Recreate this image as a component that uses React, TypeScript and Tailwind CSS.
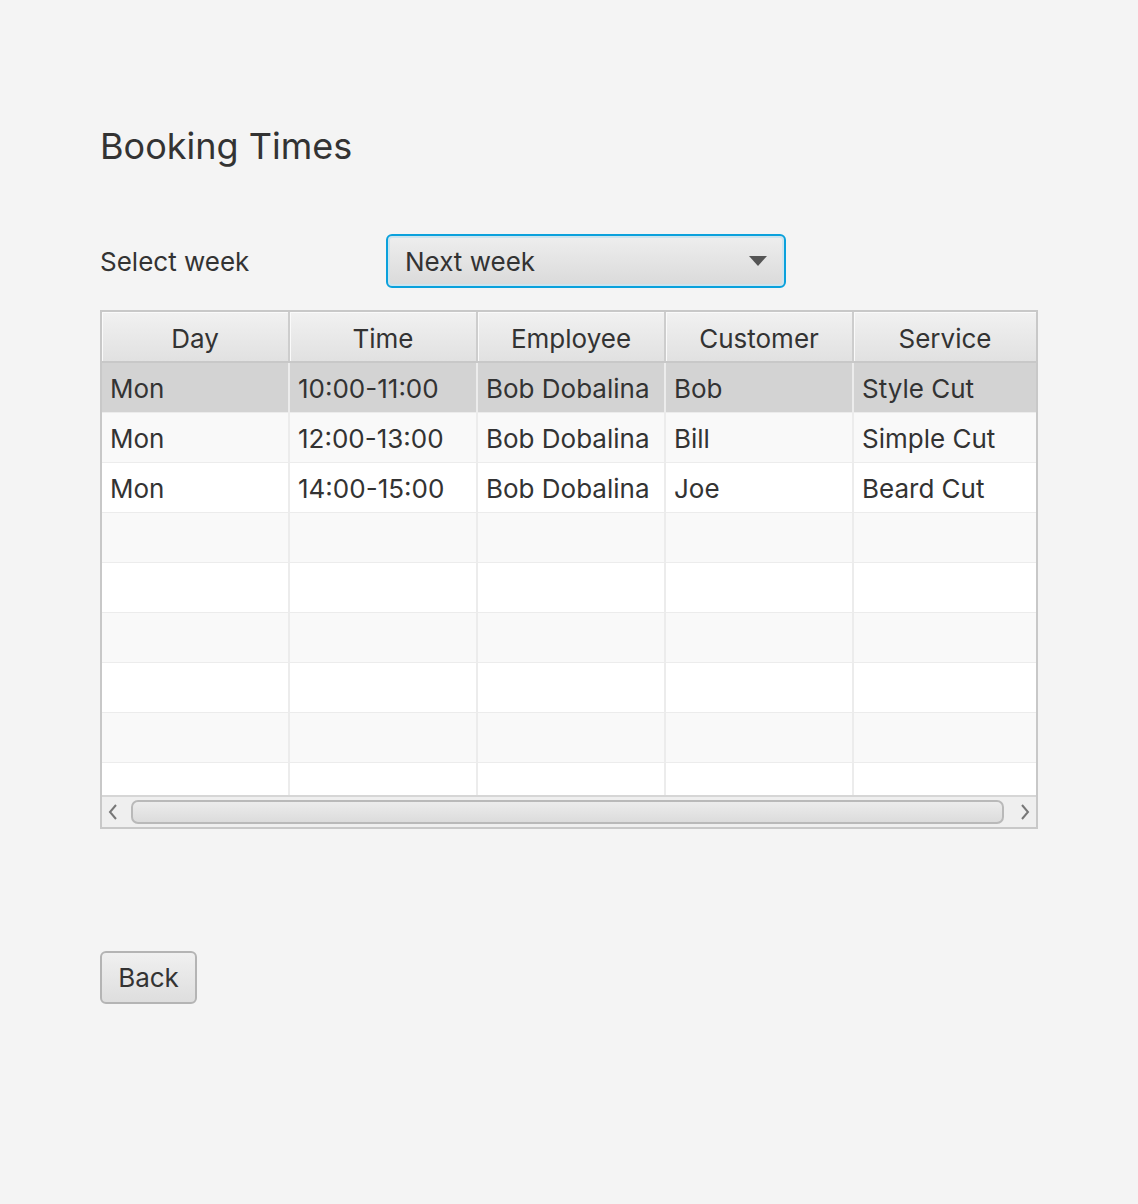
import React from "react"

const font = { fontFamily: "Inter, 'Liberation Sans', sans-serif" }

const columns = ["Day", "Time", "Employee", "Customer", "Service"]
const widths = ["w-[188px]", "w-[188px]", "w-[188px]", "w-[188px]", "flex-1"]

const bookings = [
  ["Mon", "10:00-11:00", "Bob Dobalina", "Bob", "Style Cut"],
  ["Mon", "12:00-13:00", "Bob Dobalina", "Bill", "Simple Cut"],
  ["Mon", "14:00-15:00", "Bob Dobalina", "Joe", "Beard Cut"],
]

function Row({ cells, index, selected, last }: { cells: string[]; index: number; selected?: boolean; last?: boolean }) {
  const bg = selected ? "bg-[#d3d3d3]" : index % 2 === 1 ? "bg-[#f9f9f9]" : "bg-white"
  return (
    <div className={`flex ${last ? "h-[32px]" : "h-[50px] border-b border-[#ececec]"} ${bg}`}>
      {widths.map((w, i) => (
        <div
          key={i}
          className={`${w} flex items-center px-[8px] pt-[2px] text-[26px] text-[#333] ${i < 4 ? "border-r-2 border-[#ececec]" : ""}`}
        >
          {cells[i] ?? ""}
        </div>
      ))}
    </div>
  )
}

export default function App() {
  const emptyRows = 5
  return (
    <div className="min-h-[1204px] w-full bg-[#f4f4f4] pl-[100px] pt-[124px]" style={font}>
      <h1 className="text-[36px] leading-[44px] text-[#333]">Booking Times</h1>

      <div className="mt-[66px] flex items-center">
        <span className="w-[286px] text-[26px] text-[#333]">Select week</span>
        <div className="flex h-[54px] w-[400px] items-center justify-between rounded-[6px] border-2 border-[#0aa1dc] bg-gradient-to-b from-[#eeeeee] to-[#dadada] pl-[17px] pr-[17px] shadow-[inset_0_0_0_2px_#cde4ee]">
          <span className="text-[26px] text-[#333]">Next week</span>
          <svg width="18" height="10" viewBox="0 0 18 10">
            <path d="M0 0 H18 L9 10 Z" fill="#555" />
          </svg>
        </div>
      </div>

      <div className="mt-[22px] w-[938px] border-2 border-[#c8c8c8] bg-white">
        <div className="flex h-[51px] bg-gradient-to-b from-[#f1f1f1] to-[#e1e1e1] border-b-2 border-[#c8c8c8]">
          {columns.map((c, i) => (
            <div
              key={c}
              className={`${widths[i]} flex items-center justify-center pt-[4px] text-[26px] text-[#333] shadow-[inset_1px_1px_0_#fafafa] ${i < 4 ? "border-r-2 border-[#cdcdcd]" : ""}`}
            >
              {c}
            </div>
          ))}
        </div>
        {bookings.map((b, i) => (
          <Row key={i} cells={b} index={i} selected={i === 0} />
        ))}
        {Array.from({ length: emptyRows }).map((_, i) => (
          <Row key={"e" + i} cells={[]} index={i + 3} />
        ))}
        <Row cells={[]} index={8} last />
        <div className="flex h-[32px] items-center border-t-2 border-[#d6d6d6] bg-[#efefef]">
          <div className="flex w-[29px] justify-start pl-[6px]">
            <svg width="10" height="16" viewBox="0 0 10 16">
              <path d="M8 1 L2 8 L8 15" stroke="#777" strokeWidth="2" fill="none" />
            </svg>
          </div>
          <div className="h-[24px] w-[873px] rounded-[7px] border-2 border-[#b9b9b9] bg-gradient-to-b from-[#ececec] to-[#dcdcdc]" />
          <div className="flex flex-1 justify-start pl-[16px]">
            <svg width="10" height="16" viewBox="0 0 10 16">
              <path d="M2 1 L8 8 L2 15" stroke="#777" strokeWidth="2" fill="none" />
            </svg>
          </div>
        </div>
      </div>

      <button className="mt-[122px] flex h-[53px] w-[97px] items-center justify-center rounded-[6px] border-2 border-[#b4b4b4] bg-gradient-to-b from-[#f0f0f0] to-[#dedede] text-[26px] text-[#333]">
        Back
      </button>
    </div>
  )
}
